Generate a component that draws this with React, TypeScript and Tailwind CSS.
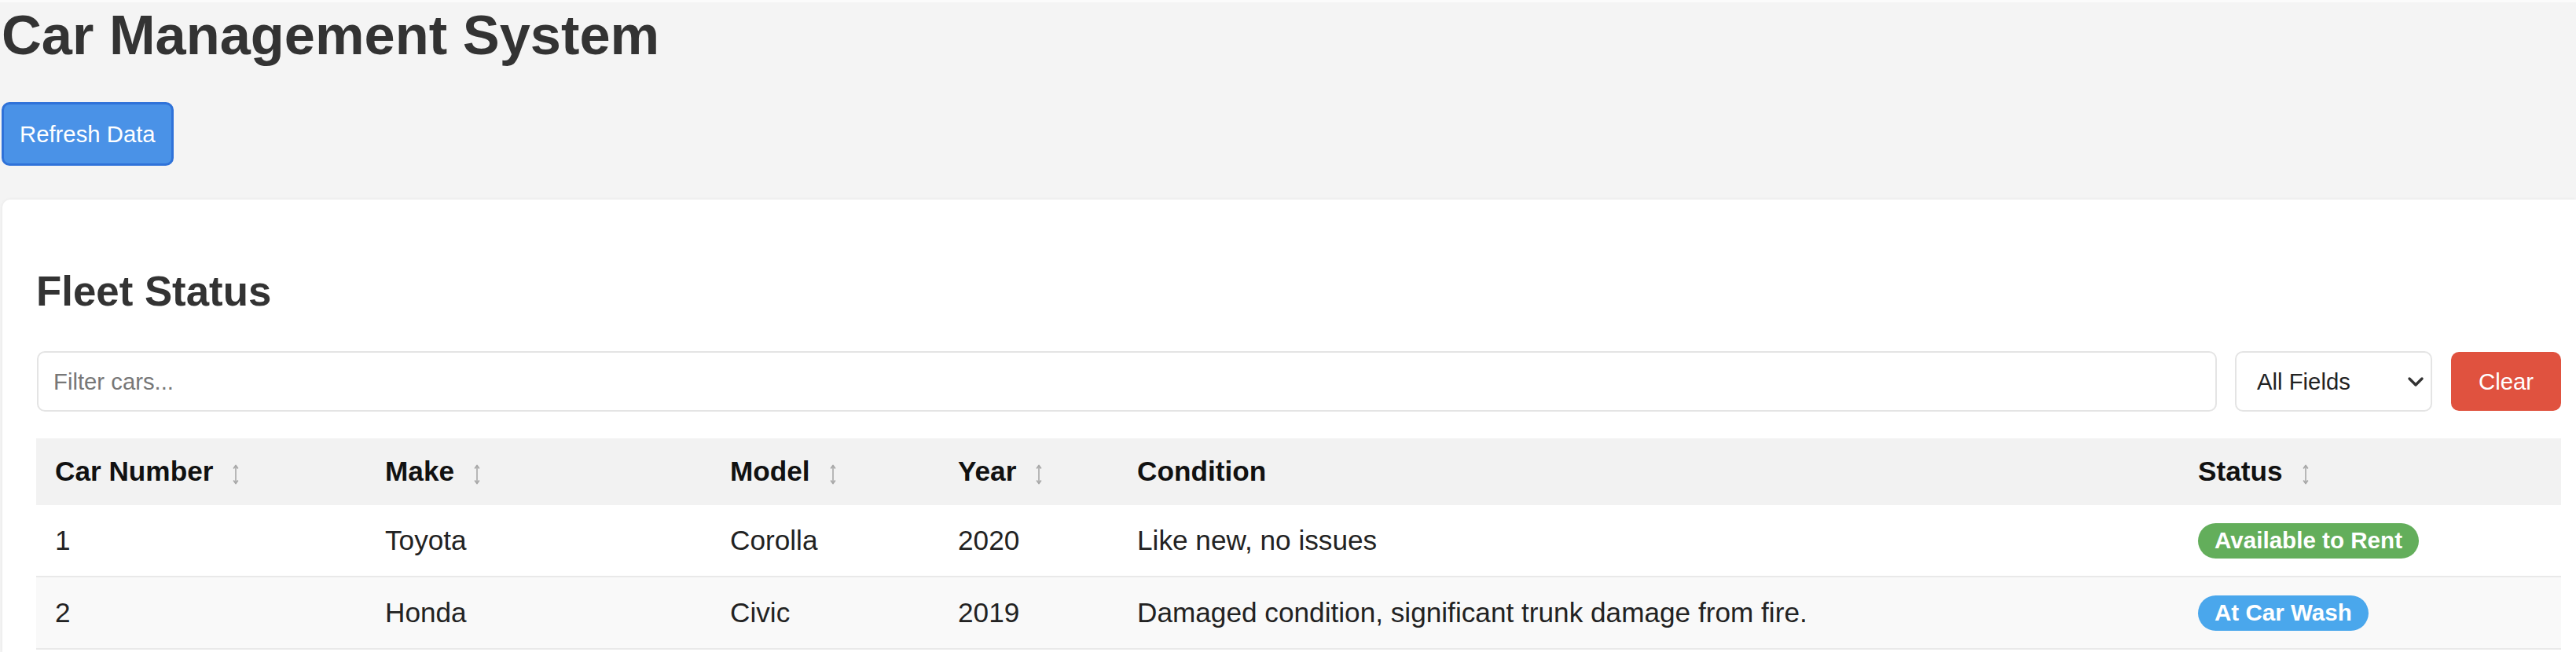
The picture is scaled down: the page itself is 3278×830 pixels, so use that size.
import React from "react";

const SortIcon = () => (
  <svg width="10" height="28" viewBox="0 0 10 28" className="ml-[24px] mt-[6px] shrink-0" fill="none">
    <path d="M5 3 L5 25" stroke="#a8a8a8" strokeWidth="1.6" />
    <path d="M2.2 6.5 L5 2.5 L7.8 6.5" stroke="#a8a8a8" strokeWidth="1.8" strokeLinejoin="round" />
    <path d="M2.2 21.5 L5 25.5 L7.8 21.5" stroke="#a8a8a8" strokeWidth="1.8" strokeLinejoin="round" />
  </svg>
);

const cols = "grid grid-cols-[420px_439px_290px_228px_1350px_1fr]";

type Row = { num: string; make: string; model: string; year: string; cond: string; status: string; color: string };

const rows: Row[] = [
  { num: "1", make: "Toyota", model: "Corolla", year: "2020", cond: "Like new, no issues", status: "Available to Rent", color: "bg-[#63ae5b]" },
  { num: "2", make: "Honda", model: "Civic", year: "2019", cond: "Damaged condition, significant trunk damage from fire.", status: "At Car Wash", color: "bg-[#4aa7ec]" },
];

export default function App() {
  const headers: { label: string; sort: boolean }[] = [
    { label: "Car Number", sort: true },
    { label: "Make", sort: true },
    { label: "Model", sort: true },
    { label: "Year", sort: true },
    { label: "Condition", sort: false },
    { label: "Status", sort: true },
  ];
  return (
    <div className="h-[830px] overflow-hidden bg-[#f4f4f4] border-t-[3px] border-[#fbfbfb] font-['Liberation_Sans',Arial,Helvetica,sans-serif] flex flex-col">
      <div className="pl-[2px] pt-[2px] flex flex-col items-start">
        <h1 className="m-0 text-[70.4px] leading-[80px] font-bold text-[#333]">Car Management System</h1>
        <button className="mt-[45px] h-[81px] px-[20px] rounded-[10px] border-[3px] border-[#2f72d9] bg-[#4a92e7] text-white text-[29.3px] leading-[34px]">
          Refresh Data
        </button>
      </div>
      <div className="ml-[3px] mt-[43px] flex-1 rounded-tl-[10px] bg-white shadow-[0_0_4px_rgba(0,0,0,0.07)] pt-[44px] pl-[43px] pr-[19px]">
        <h2 className="m-0 mt-[43px] text-[52.8px] leading-[60px] font-bold text-[#333]">Fleet Status</h2>
        <div className="mt-[46px] flex items-center h-[77px]">
          <input
            placeholder="Filter cars..."
            className="ml-[1px] h-[77px] flex-1 rounded-[10px] border-2 border-[#e4e4e4] bg-white pl-[19px] text-[29.3px] text-[#222] placeholder:text-[#777] outline-none"
          />
          <div className="ml-[23px] h-[77px] w-[251px] rounded-[10px] border-2 border-[#e4e4e4] bg-white flex items-center justify-between pl-[26px] pr-[8px] text-[29.3px] text-[#222]">
            <span>All Fields</span>
            <svg width="22" height="14" viewBox="0 0 22 14" fill="none">
              <path d="M3 3 L11 11 L19 3" stroke="#333" strokeWidth="3.4" strokeLinecap="round" strokeLinejoin="round" />
            </svg>
          </div>
          <button className="ml-[24px] h-[75px] w-[140px] rounded-[10px] bg-[#e0523f] text-white text-[29.3px]">Clear</button>
        </div>
        <div className="mt-[34px]">
          <div className={`${cols} h-[85px] bg-[#f2f2f2]`}>
            {headers.map((h) => (
              <div key={h.label} className="flex items-center pl-[24px] text-[35.2px] font-bold text-[#111]">
                <span>{h.label}</span>
                {h.sort && <SortIcon />}
              </div>
            ))}
          </div>
          {rows.map((r, i) => (
            <div key={r.num} className={`${cols} h-[92px] border-b-2 border-[#e9e9e9] ${i % 2 === 1 ? "bg-[#f9f9f9]" : "bg-white"}`}>
              {[r.num, r.make, r.model, r.year, r.cond].map((c, j) => (
                <div key={j} className="flex items-center pl-[24px] text-[35.2px] text-[#222] whitespace-nowrap">
                  {c}
                </div>
              ))}
              <div className="flex items-center pl-[24px]">
                <span className={`${r.color} h-[45px] rounded-full px-[21px] flex items-center text-white font-bold text-[29.6px]`}>
                  {r.status}
                </span>
              </div>
            </div>
          ))}
        </div>
      </div>
    </div>
  );
}
